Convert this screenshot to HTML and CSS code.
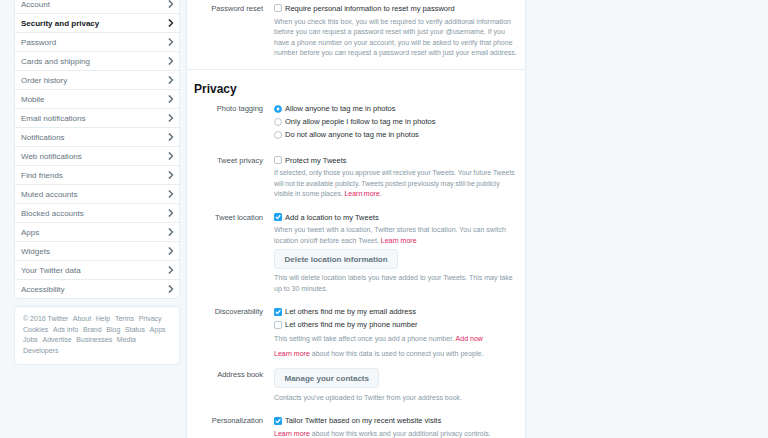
FILE: index.html
```html
<!DOCTYPE html>
<html lang="en">
<head>
<meta charset="utf-8">
<title>Security and privacy</title>
<link rel="stylesheet" href="styles.css">
</head>
<body>
<div class="page">
  <aside class="side">
    <nav class="card menu">
      <a class="item">Account<svg class="chev" viewBox="0 0 6 8"><path d="M1.3 0.9 L4.5 4 L1.3 7.1"/></svg></a>
      <a class="item active">Security and privacy<svg class="chev" viewBox="0 0 6 8"><path d="M1.3 0.9 L4.5 4 L1.3 7.1"/></svg></a>
      <a class="item">Password<svg class="chev" viewBox="0 0 6 8"><path d="M1.3 0.9 L4.5 4 L1.3 7.1"/></svg></a>
      <a class="item">Cards and shipping<svg class="chev" viewBox="0 0 6 8"><path d="M1.3 0.9 L4.5 4 L1.3 7.1"/></svg></a>
      <a class="item">Order history<svg class="chev" viewBox="0 0 6 8"><path d="M1.3 0.9 L4.5 4 L1.3 7.1"/></svg></a>
      <a class="item">Mobile<svg class="chev" viewBox="0 0 6 8"><path d="M1.3 0.9 L4.5 4 L1.3 7.1"/></svg></a>
      <a class="item">Email notifications<svg class="chev" viewBox="0 0 6 8"><path d="M1.3 0.9 L4.5 4 L1.3 7.1"/></svg></a>
      <a class="item">Notifications<svg class="chev" viewBox="0 0 6 8"><path d="M1.3 0.9 L4.5 4 L1.3 7.1"/></svg></a>
      <a class="item">Web notifications<svg class="chev" viewBox="0 0 6 8"><path d="M1.3 0.9 L4.5 4 L1.3 7.1"/></svg></a>
      <a class="item">Find friends<svg class="chev" viewBox="0 0 6 8"><path d="M1.3 0.9 L4.5 4 L1.3 7.1"/></svg></a>
      <a class="item">Muted accounts<svg class="chev" viewBox="0 0 6 8"><path d="M1.3 0.9 L4.5 4 L1.3 7.1"/></svg></a>
      <a class="item">Blocked accounts<svg class="chev" viewBox="0 0 6 8"><path d="M1.3 0.9 L4.5 4 L1.3 7.1"/></svg></a>
      <a class="item">Apps<svg class="chev" viewBox="0 0 6 8"><path d="M1.3 0.9 L4.5 4 L1.3 7.1"/></svg></a>
      <a class="item">Widgets<svg class="chev" viewBox="0 0 6 8"><path d="M1.3 0.9 L4.5 4 L1.3 7.1"/></svg></a>
      <a class="item">Your Twitter data<svg class="chev" viewBox="0 0 6 8"><path d="M1.3 0.9 L4.5 4 L1.3 7.1"/></svg></a>
      <a class="item">Accessibility<svg class="chev" viewBox="0 0 6 8"><path d="M1.3 0.9 L4.5 4 L1.3 7.1"/></svg></a>
    </nav>
    <div class="card foot">
      <span>© 2016 Twitter</span><span>About</span><span>Help</span><span>Terms</span><span>Privacy</span>
      <span>Cookies</span><span>Ads info</span><span>Brand</span><span>Blog</span><span>Status</span><span>Apps</span>
      <span>Jobs</span><span>Advertise</span><span>Businesses</span><span>Media</span>
      <span>Developers</span>
    </div>
  </aside>

  <main class="panel">
    <section class="sec first">
      <div class="row last">
        <div class="lbl">Password reset</div>
        <div class="ctl">
          <div class="opt"><svg class="box" viewBox="0 0 8 8"><rect x="0.5" y="0.5" width="7" height="7" rx="1.5" class="off"/></svg>Require personal information to reset my password</div>
          <p class="desc d-first">When you check this box, you will be required to verify additional information before you can request a password reset with just your @username. If you have a phone number on your account, you will be asked to verify that phone number before you can request a password reset with just your email address.</p>
        </div>
      </div>
    </section>

    <section class="sec">
      <h2 class="title">Privacy</h2>

      <div class="row tag">
        <div class="lbl">Photo tagging</div>
        <div class="ctl">
          <div class="opt"><svg class="box" viewBox="0 0 8 8"><circle cx="4" cy="4" r="3.8" class="on"/><circle cx="4" cy="4" r="1.4" fill="#fff"/></svg>Allow anyone to tag me in photos</div>
          <div class="opt"><svg class="box" viewBox="0 0 8 8"><circle cx="4" cy="4" r="3.5" class="off"/></svg>Only allow people I follow to tag me in photos</div>
          <div class="opt"><svg class="box" viewBox="0 0 8 8"><circle cx="4" cy="4" r="3.5" class="off"/></svg>Do not allow anyone to tag me in photos</div>
        </div>
      </div>

      <div class="row">
        <div class="lbl">Tweet privacy</div>
        <div class="ctl">
          <div class="opt"><svg class="box" viewBox="0 0 8 8"><rect x="0.5" y="0.5" width="7" height="7" rx="1.5" class="off"/></svg>Protect my Tweets</div>
          <p class="desc tight">If selected, only those you approve will receive your Tweets. Your future Tweets will not be available publicly. Tweets posted previously may still be publicly visible in some places. <a class="link">Learn more.</a></p>
        </div>
      </div>

      <div class="row">
        <div class="lbl">Tweet location</div>
        <div class="ctl">
          <div class="opt"><svg class="box" viewBox="0 0 8 8"><rect x="0" y="0" width="8" height="8" rx="1.6" class="on"/><path d="M2 4.2 L3.4 5.6 L6 2.5" class="tick"/></svg>Add a location to my Tweets</div>
          <p class="desc">When you tweet with a location, Twitter stores that location. You can switch location on/off before each Tweet. <a class="link">Learn more</a></p>
          <button class="btn btn-top">Delete location information</button>
          <p class="desc after-btn">This will delete location labels you have added to your Tweets. This may take up to 30 minutes.</p>
        </div>
      </div>

      <div class="row disc">
        <div class="lbl">Discoverability</div>
        <div class="ctl">
          <div class="opt"><svg class="box" viewBox="0 0 8 8"><rect x="0" y="0" width="8" height="8" rx="1.6" class="on"/><path d="M2 4.2 L3.4 5.6 L6 2.5" class="tick"/></svg>Let others find me by my email address</div>
          <div class="opt"><svg class="box" viewBox="0 0 8 8"><rect x="0.5" y="0.5" width="7" height="7" rx="1.5" class="off"/></svg>Let others find me by my phone number</div>
          <p class="desc d-disc">This setting will take affect once you add a phone number. <a class="link">Add now</a></p>
          <p class="desc more"><a class="link">Learn more</a> about how this data is used to connect you with people.</p>
        </div>
      </div>

      <div class="row book">
        <div class="lbl lbl-btn">Address book</div>
        <div class="ctl">
          <button class="btn">Manage your contacts</button>
          <p class="desc after-btn2">Contacts you've uploaded to Twitter from your address book.</p>
        </div>
      </div>

      <div class="row">
        <div class="lbl">Personalization</div>
        <div class="ctl">
          <div class="opt"><svg class="box" viewBox="0 0 8 8"><rect x="0" y="0" width="8" height="8" rx="1.6" class="on"/><path d="M2 4.2 L3.4 5.6 L6 2.5" class="tick"/></svg>Tailor Twitter based on my recent website visits</div>
          <p class="desc d-pers"><a class="link">Learn more</a> about how this works and your additional privacy controls.</p>
        </div>
      </div>
    </section>
  </main>
</div>
</body>
</html>
```

FILE: styles.css
```css
* { box-sizing: border-box; }

html, body {
  margin: 0;
  padding: 0;
}

body {
  background: #f5f8fa;
  font-family: "Liberation Sans", Arial, sans-serif;
  color: #292f33;
  overflow: hidden;
}

.page {
  display: flex;
  align-items: flex-start;
  gap: 6px;
  padding-left: 14px;
  height: 438px;
  overflow: hidden;
}

/* ---------- sidebar ---------- */
.side {
  width: 166px;
  flex: none;
}

.card {
  background: #fff;
  border: 1px solid #e6ecf0;
  border-radius: 4px;
}

.menu {
  margin-top: -6px;
  display: flex;
  flex-direction: column;
}

.item {
  display: flex;
  align-items: center;
  justify-content: space-between;
  height: 19px;
  padding: 0 5px 0 6px;
  border-bottom: 1px solid #e6ecf0;
  font-size: 8px;
  color: #66757f;
  text-decoration: none;
  white-space: nowrap;
}

.item:last-child {
  border-bottom: none;
  height: 18px;
}

.item.active {
  font-weight: bold;
  color: #14171a;
}

.chev {
  width: 6px;
  height: 8px;
  fill: none;
  stroke: #66757f;
  stroke-width: 1.5;
  stroke-linecap: round;
  stroke-linejoin: round;
}

.item.active .chev {
  stroke: #292f33;
}

.foot {
  margin-top: 7px;
  padding: 7px 8px 8px 8px;
  display: flex;
  flex-wrap: wrap;
  column-gap: 4.7px;
  font-size: 7px;
  line-height: 10.5px;
  color: #8899a6;
  white-space: nowrap;
}

/* ---------- main panel ---------- */
.panel {
  width: 340px;
  flex: none;
  min-height: 460px;
  background: #fff;
  border-left: 1px solid #e6ecf0;
  border-right: 1px solid #e6ecf0;
  padding-top: 1.5px;
}

.sec.first {
  border-bottom: 1px solid #e6ecf0;
  padding-bottom: 10px;
}

.sec + .sec {
  padding-top: 11px;
}

.title {
  margin: 0 0 5.5px 7px;
  font-size: 12px;
  line-height: 16px;
  font-weight: bold;
  color: #14171a;
}

.row {
  display: grid;
  grid-template-columns: 76px 244px;
  column-gap: 11px;
  margin-bottom: 11px;
}

.row.last {
  margin-bottom: 0;
}

.row.tag {
  margin-bottom: 12.5px;
}

.row.disc {
  margin-bottom: 7.5px;
}

.row.book {
  margin-bottom: 10.5px;
}

.lbl {
  text-align: right;
  font-size: 7.5px;
  line-height: 13px;
  color: #4b5660;
  white-space: nowrap;
}

.lbl-btn {
  padding-top: 1.5px;
}

.opt {
  display: flex;
  align-items: center;
  gap: 3px;
  font-size: 7.5px;
  line-height: 13px;
  color: #292f33;
  white-space: nowrap;
}

.box {
  width: 8px;
  height: 8px;
  flex: none;
}

.box .off {
  fill: #fff;
  stroke: #aab8c2;
  stroke-width: 0.8;
}

.box .on {
  fill: #1da1f2;
}

.box .tick {
  fill: none;
  stroke: #fff;
  stroke-width: 1.2;
  stroke-linecap: round;
  stroke-linejoin: round;
}

.desc {
  margin: 1.5px 0 0;
  font-size: 7px;
  line-height: 10.5px;
  color: #8899a6;
}

.desc.tight {
  word-spacing: -0.4px;
}

.desc.d-first {
  margin-top: 2px;
}

.desc.d-disc {
  margin-top: 2.5px;
}

.desc.d-pers {
  margin-top: 1.5px;
}

.desc.more {
  margin-top: 4.5px;
}

.desc.after-btn {
  margin-top: 4px;
}

.desc.after-btn2 {
  margin-top: 5px;
}

.link {
  color: #e0245e;
  text-decoration: none;
}

.btn {
  display: inline-flex;
  align-items: center;
  height: 20px;
  padding: 0 9.5px;
  border: 1px solid #e6ecf0;
  border-radius: 3px;
  background: #f5f8fa;
  font-family: "Liberation Sans", Arial, sans-serif;
  font-size: 8px;
  font-weight: bold;
  color: #66757f;
  margin: 0;
}

.btn.btn-top {
  margin-top: 3px;
}
```
